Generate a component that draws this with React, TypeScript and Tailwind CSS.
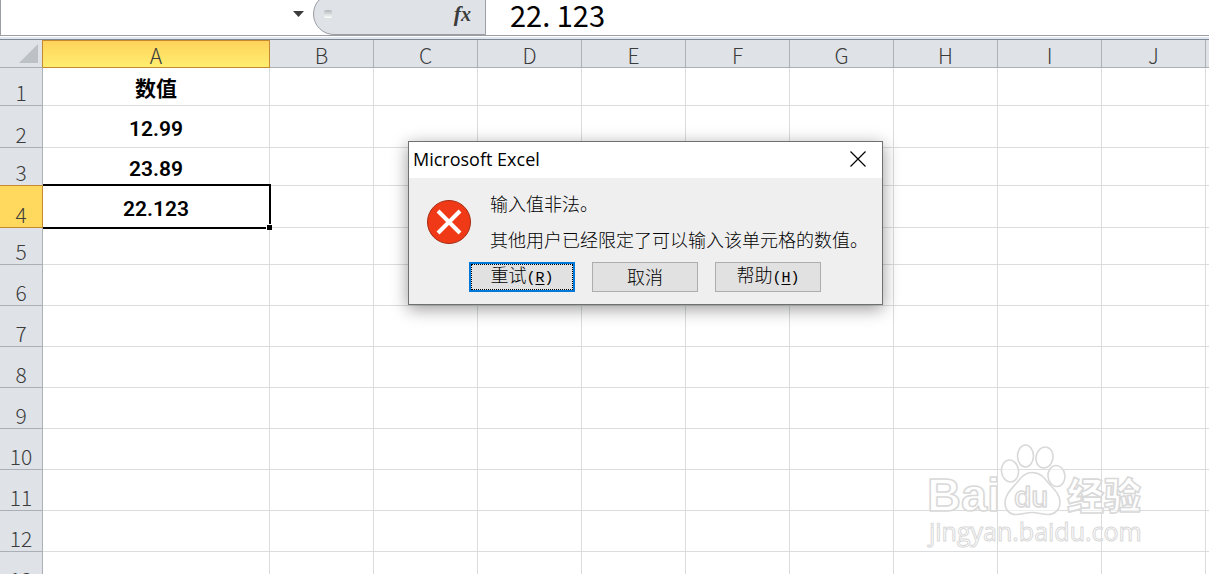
import { useState } from "react";
import clsx from "clsx";

type Row = { id: number; height: string; value?: string };

const COLUMNS = ["A", "B", "C", "D", "E", "F", "G", "H", "I", "J"];

const ROWS: Row[] = [
    { id: 1, height: "h-[38px]", value: "数值" },
    { id: 2, height: "h-[42px]", value: "12.99" },
    { id: 3, height: "h-[38px]", value: "23.89" },
    { id: 4, height: "h-[42px]", value: "22.123" },
    { id: 5, height: "h-[37px]" },
    { id: 6, height: "h-[41px]" },
    { id: 7, height: "h-[41px]" },
    { id: 8, height: "h-[41px]" },
    { id: 9, height: "h-[41px]" },
    { id: 10, height: "h-[41px]" },
    { id: 11, height: "h-[41px]" },
    { id: 12, height: "h-[41px]" },
    { id: 13, height: "h-[41px]" },
];

const ACTIVE_ROW = 4;

function FormulaBar() {
    const [formula, setFormula] = useState("22. 123");

    return (
        <div className="flex h-9 items-end overflow-hidden border-b border-l border-[#9a9da3] bg-white">
            <div className="flex h-full w-[312px] shrink-0 items-center">
                <input aria-label="名称框" className="h-full min-w-0 flex-1 px-2 outline-none" />
                <button aria-label="名称列表" className="flex h-7 w-[30px] items-center justify-center self-start">
                    <svg width="11" height="6" viewBox="0 0 11 6" fill="#3c3c3c">
                        <path d="M0 0h11L5.5 6z" />
                    </svg>
                </button>
            </div>
            <div className="flex h-[42px] w-[173px] shrink-0 items-center justify-between rounded-l-full border border-[#9a9da3] bg-[#dfe3e8] pr-3.5 pl-2.5">
                <span className="h-2 w-2 rounded-xs bg-linear-to-b from-[#b3b6ba] to-white" />
                <button aria-label="插入函数" className="flex items-baseline font-['Liberation_Serif',serif] font-bold text-[#3c3c3c] italic">
                    <span className="text-[22px] leading-6">f</span>
                    <span className="text-xl leading-6">x</span>
                </button>
            </div>
            <input
                aria-label="编辑栏"
                value={formula}
                onChange={(e) => setFormula(e.target.value)}
                className="h-full min-w-0 flex-1 pb-2 pl-6 font-['Noto_Sans_CJK_SC',sans-serif] text-[29px] leading-7 text-black outline-none"
            />
        </div>
    );
}

function Sheet() {
    return (
        <table className="w-full table-fixed border-separate border-spacing-0 font-['Noto_Sans_CJK_SC',sans-serif]">
            <colgroup>
                <col className="w-[43px]" />
                <col className="w-[227px]" />
                {COLUMNS.slice(1).map((c) => (
                    <col key={c} className="w-[104px]" />
                ))}
                <col />
            </colgroup>
            <thead>
                <tr className="h-7 bg-[#dfe3e8] text-[21px] leading-5 text-[#3c3c3c]">
                    <td className="border-r border-b border-r-[#c6892f] border-b-[#abb0b7] p-0">
                        <svg className="ml-auto mr-1" width="19" height="19" viewBox="0 0 19 19" fill="#bcc1c6">
                            <path d="M19 0v19H0z" />
                        </svg>
                    </td>
                    {COLUMNS.map((c) => (
                        <th
                            key={c}
                            scope="col"
                            className={clsx(
                                "border-r border-b p-0 font-light",
                                c === "A"
                                    ? "border-t border-[#c6892f] bg-linear-to-b from-[#ffd35b] to-[#ffee70] pt-px"
                                    : "border-[#abb0b7] pt-0.5"
                            )}
                        >
                            {c}
                        </th>
                    ))}
                    <td className="border-b border-[#abb0b7] p-0" />
                </tr>
            </thead>
            <tbody>
                {ROWS.map((row) => (
                    <tr key={row.id} className={row.height}>
                        <th
                            scope="row"
                            className={clsx(
                                "border-r border-b p-0 pb-px align-bottom text-[21px] leading-6 font-light text-[#3c3c3c]",
                                row.id === ACTIVE_ROW ? "border-[#c6892f] bg-[#ffd95e]" : "border-r-[#abb0b7] bg-[#dfe3e8]",
                                row.id === ACTIVE_ROW - 1 && "border-b-[#c6892f]",
                                row.id !== ACTIVE_ROW && row.id !== ACTIVE_ROW - 1 && "border-b-[#abb0b7]"
                            )}
                        >
                            {row.id}
                        </th>
                        {COLUMNS.map((c) => (
                            <td
                                key={c}
                                className={clsx(
                                    "border-r border-b border-[#dadcdd] p-0",
                                    c === "A" && "pt-1 text-center font-['Roboto','Noto_Sans_CJK_SC',sans-serif] text-[21px] leading-6 font-semibold text-black",
                                    c === "A" && row.id === ACTIVE_ROW && "relative"
                                )}
                            >
                                {c === "A" && row.value}
                                {c === "A" && row.id === ACTIVE_ROW && (
                                    <span className="absolute -top-0.5 -right-0.5 -bottom-0.5 left-0 border-2 border-l-0 border-black">
                                        <span className="absolute -right-[3px] -bottom-[3px] h-1.5 w-1.5 border-t border-l border-white bg-black" />
                                    </span>
                                )}
                            </td>
                        ))}
                        <td className="border-b border-[#dadcdd] p-0" />
                    </tr>
                ))}
            </tbody>
        </table>
    );
}

function DialogButton({ label, hotkey, focused }: { label: string; hotkey?: string; focused?: boolean }) {
    return (
        <button
            className={clsx(
                "h-[30px] w-[106px] bg-[#e1e1e1]",
                focused ? "border-2 border-[#0078d7]" : "border border-[#adadad]"
            )}
        >
            <span className={clsx("flex h-full items-center justify-center pb-0.5", focused && "border border-dotted border-black")}>
                <span className="leading-5">
                    {label}
                    {hotkey && (
                        <span className="font-['Liberation_Mono',monospace] text-[15px]">
                            (<u className="underline-offset-2">{hotkey}</u>)
                        </span>
                    )}
                </span>
            </span>
        </button>
    );
}

function ErrorDialog() {
    return (
        <div
            role="alertdialog"
            aria-labelledby="dialog-title"
            className="absolute top-[141px] left-[408px] w-[475px] border border-[#6f7170] bg-[#efefef] font-['Noto_Sans_CJK_SC',sans-serif] text-lg font-light text-black shadow-[0_4px_16px_rgba(0,0,0,0.4)]"
        >
            <div className="flex h-9 items-center justify-between bg-white pr-4 pb-0.5 pl-1">
                <h1 id="dialog-title" className="font-['Open_Sans',sans-serif] text-lg leading-6 font-normal">Microsoft Excel</h1>
                <button aria-label="关闭">
                    <svg width="16" height="16" viewBox="0 0 16 16" stroke="#000" strokeWidth="1.2" fill="none">
                        <path d="M.5.5l15 15M15.5.5l-15 15" />
                    </svg>
                </button>
            </div>
            <div className="flex gap-[19px] pt-[7px] pl-[18px]">
                <svg className="mt-[15px] shrink-0" width="44" height="44" viewBox="0 0 44 44">
                    <circle cx="22" cy="22" r="21.5" fill="#f03a17" stroke="#a52c14" />
                    <path d="M11 11l22 22M33 11L11 33" stroke="#fff" strokeWidth="4" />
                </svg>
                <div className="leading-9">
                    <p>输入值非法。</p>
                    <p>其他用户已经限定了可以输入该单元格的数值。</p>
                </div>
            </div>
            <div className="flex gap-[17px] pt-[5px] pb-3 pl-[60px]">
                <DialogButton label="重试" hotkey="R" focused />
                <DialogButton label="取消" />
                <DialogButton label="帮助" hotkey="H" />
            </div>
        </div>
    );
}

function Watermark() {
    return (
        <svg
            className="pointer-events-none absolute right-[61px] bottom-[22px]"
            width="224"
            height="112"
            viewBox="0 0 224 112"
            fill="#fff"
            fillOpacity="0.5"
            stroke="#d9d9d9"
            strokeWidth="1.6"
            strokeLinejoin="round"
        >
            <text x="3" y="71" fontFamily="Liberation Sans, sans-serif" fontWeight="700" fontSize="47">Bai</text>
            <ellipse cx="86" cy="31" rx="8.5" ry="11" transform="rotate(-6 86 31)" />
            <ellipse cx="101.5" cy="16" rx="8" ry="11" />
            <ellipse cx="120.5" cy="17.5" rx="8.5" ry="10.5" transform="rotate(12 120.5 17.5)" />
            <ellipse cx="132.5" cy="36" rx="8.5" ry="10.5" transform="rotate(-6 132.5 36)" />
            <path d="M108 32.5c8 0 12 5 16 10 5 6 12 11 12 20 0 7-5 12-12 12-6 0-10-2-16-2s-10 2-16 2c-7 0-11-5-11-12 0-8 7-14 12-20 4-5 8-10 15-10z" />
            <text x="90" y="67" fontFamily="Inter, sans-serif" fontWeight="500" fontSize="28">du</text>
            <text x="143" y="70" fontFamily="Noto Sans CJK SC, sans-serif" fontWeight="900" fontSize="37">经验</text>
            <text x="5" y="101" fontFamily="Open Sans, sans-serif" fontSize="25" strokeWidth="1">jingyan.baidu.com</text>
        </svg>
    );
}

export default function App() {
    return (
        <main className="relative h-screen overflow-hidden bg-white">
            <FormulaBar />
            <div className="mt-px h-[3px] border-b border-[#7f8792] bg-[#e1e7f0]" />
            <Sheet />
            <ErrorDialog />
            <Watermark />
        </main>
    );
}
